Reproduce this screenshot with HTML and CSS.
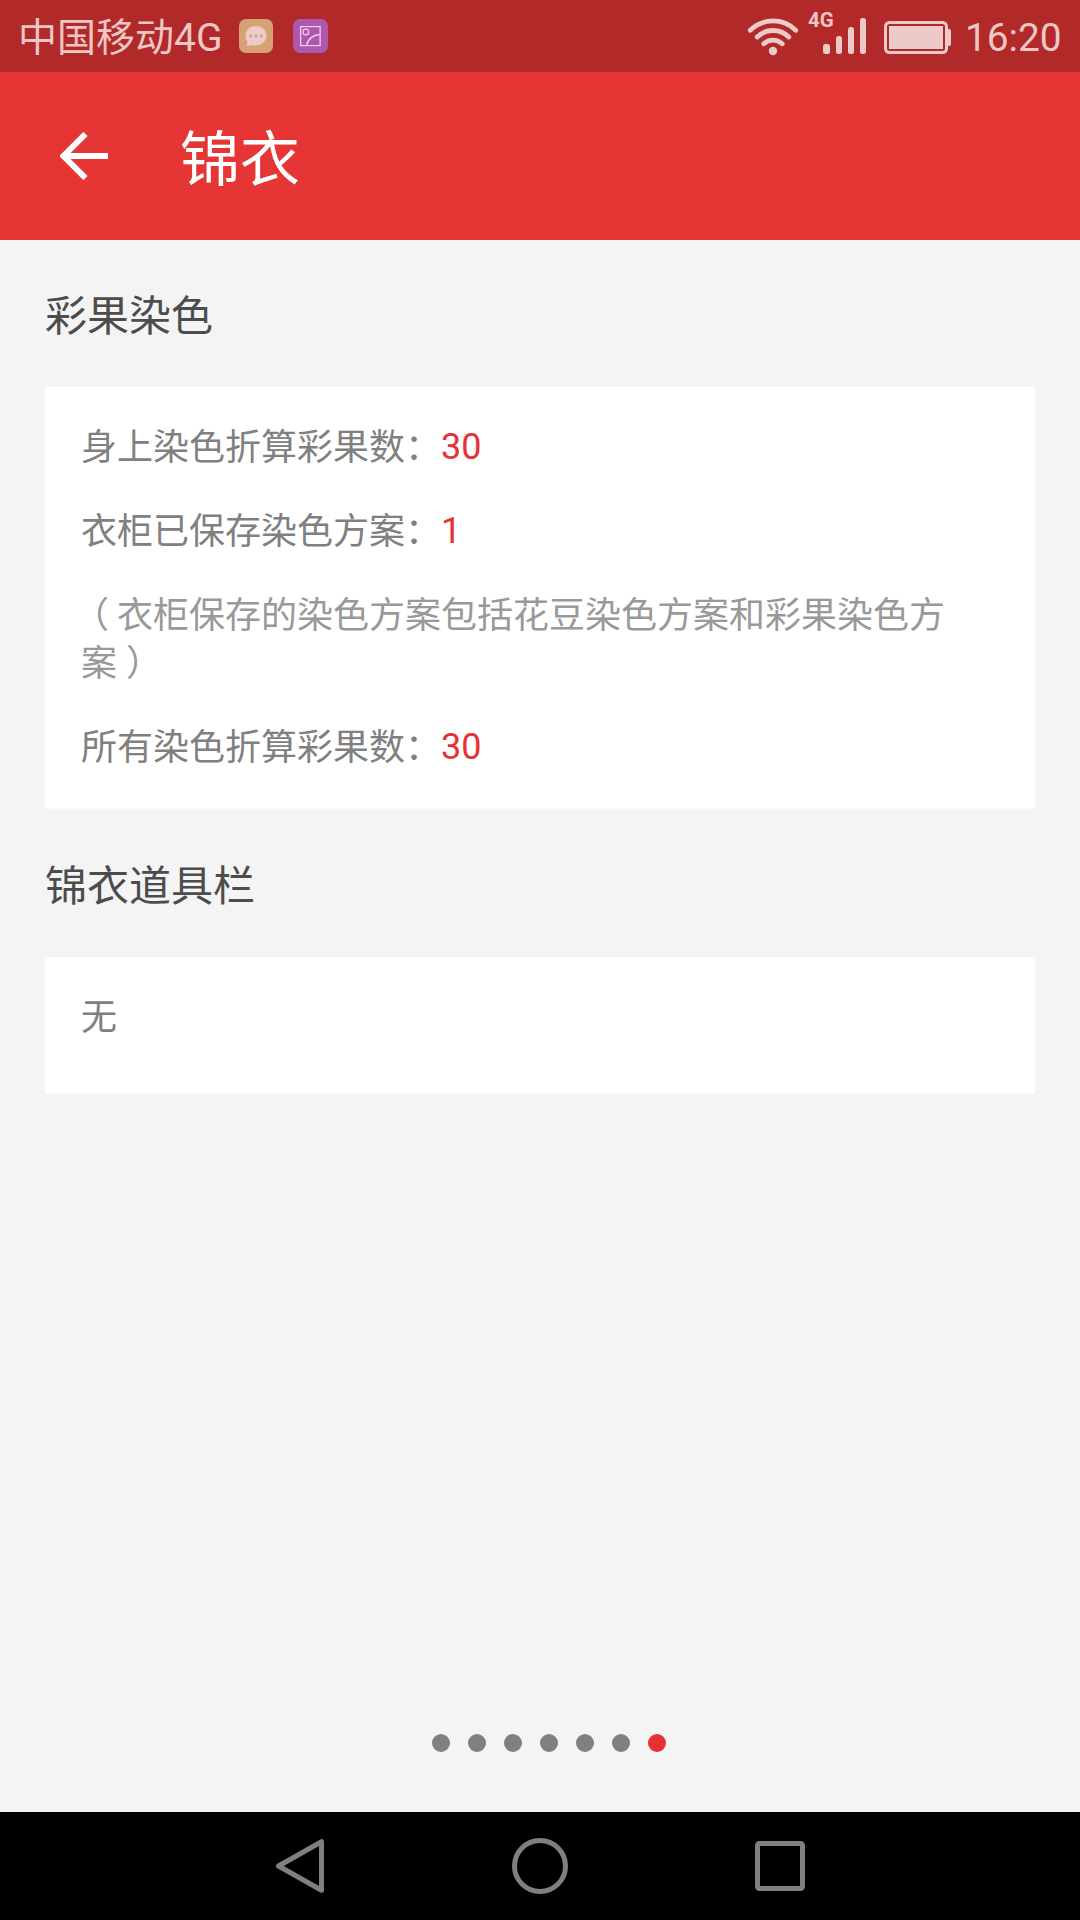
FILE: index.html
```html
<!DOCTYPE html>
<html lang="zh-CN">
<head>
<meta charset="utf-8">
<title>锦衣</title>
<link rel="stylesheet" href="styles.css">
</head>
<body>
<div class="screen">
  <div class="status">
    <span class="carrier">中国移动4G</span>
    <svg class="chat" width="34" height="34" viewBox="0 0 34 34"><rect width="34" height="34" rx="7" fill="#d7a075"/><path d="M17 7c6 0 10.500 4 10.500 9.500S23 26.500 17 26.500c-2 0-3-.3-4-.6L7.500 27l1-4C7 21.200 6.500 19 6.500 16.500 6.500 11 11 7 17 7z" fill="#eccac8"/><g fill="#c9a08c"><circle cx="11.700" cy="17" r="1.400"/><circle cx="17" cy="17" r="1.400"/><circle cx="22.500" cy="17" r="1.400"/></g></svg>
    <svg class="gallery" width="35" height="34" viewBox="0 0 35 34"><rect width="35" height="34" rx="7" fill="#ad58ae"/><g fill="none" stroke="#efcdec" stroke-width="1.300"><rect x="7.600" y="7.600" width="19.500" height="19"/><circle cx="12.800" cy="13" r="2.900"/><path d="M13.500 26.500C15 20 20 16 27 15.500"/></g></svg>
    <div class="spacer"></div>
    <svg class="wifi" width="52" height="40" viewBox="0 0 52 40"><g fill="none" stroke="#eccac8" stroke-width="4.800" stroke-linecap="round"><path d="M3.300 14.200A32.500 32.500 0 0 1 48.700 14.200"/><path d="M10.200 21A22.500 22.500 0 0 1 41.800 21"/><path d="M16.800 27.800A13.500 13.500 0 0 1 35.200 27.800"/></g><circle cx="26" cy="35" r="4.200" fill="#eccac8"/></svg>
    <div class="mobile"><span class="net">4G</span><svg width="44" height="38" viewBox="0 0 44 38"><g fill="#eccac8"><rect y="27" width="7" height="10" rx="2.500"/><rect x="13" y="19" width="6" height="18" rx="2.500"/><rect x="25" y="10" width="6" height="27" rx="2.500"/><rect x="37" y="1" width="6" height="36" rx="2.500"/></g></svg></div>
    <svg class="battery" width="67" height="34" viewBox="0 0 67 34"><rect x="1.500" y="1.500" width="61" height="30" rx="4" fill="none" stroke="#eccac8" stroke-width="3"/><rect x="5" y="5" width="54" height="23" fill="#eccac8"/><path d="M64 8h1q2 0 2 2v13q0 2-2 2h-1z" fill="#eccac8"/></svg>
    <span class="clock">16:20</span>
  </div>
  <header class="appbar">
    <svg class="back" width="48" height="48" viewBox="0 0 48 48"><path d="M48 24H4M25.500 2L3.500 24l22 22" fill="none" stroke="#fff" stroke-width="6"/></svg>
    <h1 class="title">锦衣</h1>
  </header>
  <main class="content">
    <h2 class="section">彩果染色</h2>
    <div class="card">
      <p>身上染色折算彩果数：<b>30</b></p>
      <p>衣柜已保存染色方案：<b>1</b></p>
      <p class="note"><span class="open">（</span>衣柜保存的染色方案包括花豆染色方案和彩果染色方案<span class="close">）</span></p>
      <p>所有染色折算彩果数：<b>30</b></p>
    </div>
    <h2 class="section">锦衣道具栏</h2>
    <div class="card items"><p>无</p></div>
    <div class="dots"><i></i><i></i><i></i><i></i><i></i><i></i><i class="on"></i></div>
  </main>
  <nav class="navbar">
    <svg width="60" height="60" viewBox="0 0 60 60"><path d="M51.500 5.700V54.300L8.500 30z" fill="none" stroke="#808080" stroke-width="5" stroke-linejoin="round"/></svg>
    <svg width="60" height="60" viewBox="0 0 60 60"><circle cx="30" cy="30" r="25.500" fill="none" stroke="#808080" stroke-width="5"/></svg>
    <svg width="60" height="60" viewBox="0 0 60 60"><rect x="7.500" y="7.500" width="45" height="45" rx="2" fill="none" stroke="#808080" stroke-width="5"/></svg>
  </nav>
</div>
</body>
</html>
```
FILE: styles.css
```css
* { box-sizing: border-box; margin: 0; padding: 0; }
body { font-family: Roboto, "Noto Sans CJK SC", sans-serif; background: #f4f4f4; }
.screen { width: 1080px; height: 1920px; display: flex; flex-direction: column; overflow: hidden; }
svg { display: block; flex: none; }

.status { height: 72px; background: #b12928; color: #eec7c5; display: flex; align-items: center; padding: 0 18px; font-size: 39px; line-height: 72px; }
.carrier { width: 221px; white-space: nowrap; padding-top: 3px; }
.gallery { margin-left: 20px; }
.spacer { flex: 1; }
.wifi { margin-right: 9px; }
.mobile { width: 59px; height: 72px; display: flex; flex-direction: column; align-items: flex-end; position: relative; padding-top: 17px; }
.net { position: absolute; left: 0; top: 10px; font-size: 20.5px; line-height: 20px; font-weight: 700; }
.battery { margin: 3px 14px 0 17px; }
.clock { width: 97px; white-space: nowrap; padding-top: 3px; font-size: 38.8px; }

.appbar { height: 168px; background: #e53635; color: #fff; display: flex; align-items: center; padding-left: 60px; }
.title { font-size: 60px; font-weight: 400; line-height: 84px; margin-left: 72px; padding-top: 9px; }

.content { flex: 1; padding: 47px 45px 60px; display: flex; flex-direction: column; }
.section { font-size: 42px; line-height: 60px; font-weight: 400; color: #4c4c4c; margin-bottom: 40px; }
.card { background: #fff; padding: 37px 36px 36px; display: flex; flex-direction: column; gap: 36px; margin-bottom: 49px; box-shadow: 0 1px 1px #fafafa; font-size: 36px; line-height: 48px; color: #808080; text-spacing-trim: space-all; }
.card b { font-weight: 400; color: #e53234; line-height: 1; vertical-align: 1px; }
.note { color: #999; }
/* Parentheses sit towards the middle of their full-width cell. */
.open { margin: 0 8px 0 -8px; }
.close { margin-left: 9px; }
.items { height: 136px; }
.dots { margin-top: auto; display: flex; justify-content: center; gap: 18px; padding-left: 18px; }
.card.items { margin-bottom: 0; }
.dots i { width: 18px; height: 18px; border-radius: 50%; background: #808080; }
.dots .on { background: #e53234; }

.navbar { height: 108px; background: #000; display: flex; justify-content: center; align-items: center; gap: 180px; }
```
